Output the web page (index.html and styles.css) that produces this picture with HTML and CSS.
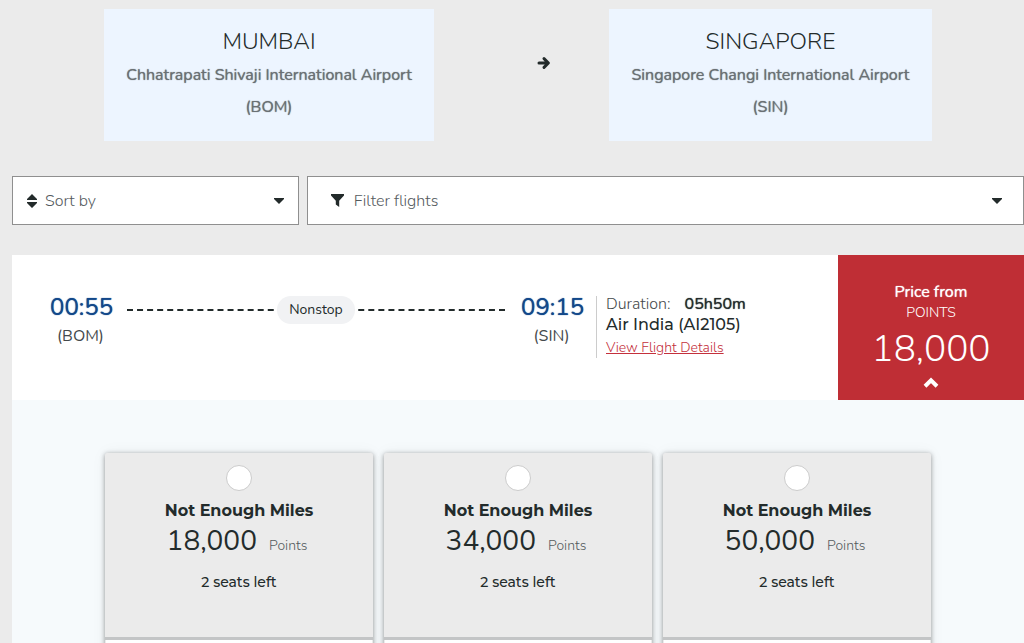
FILE: index.html
```html
<!DOCTYPE html>
<html lang="en">
<head>
<meta charset="utf-8">
<meta name="viewport" content="width=device-width, initial-scale=1">
<title>Mumbai to Singapore flights</title>
<link rel="stylesheet" href="styles.css">
</head>
<body>
<main class="page">
  <section class="route">
    <div class="airport">
      <h2 class="airport-city">MUMBAI</h2>
      <p class="airport-name">Chhatrapati Shivaji International Airport</p>
      <p class="airport-name">(BOM)</p>
    </div>
    <div class="route-arrow">
      <svg width="14" height="14" viewBox="0 0 14 14" aria-hidden="true"><path d="M2 7h9M7 2.6 11.4 7 7 11.4" fill="none" stroke="#232b2b" stroke-width="3" stroke-linecap="round" stroke-linejoin="round"/></svg>
    </div>
    <div class="airport">
      <h2 class="airport-city">SINGAPORE</h2>
      <p class="airport-name">Singapore Changi International Airport</p>
      <p class="airport-name">(SIN)</p>
    </div>
  </section>

  <section class="controls">
    <div class="control control-sort">
      <svg class="control-icon" width="10" height="14" viewBox="0 0 10 14" aria-hidden="true"><path d="M5 0 10 5v1H0V5zM0 8h10v1l-5 5-5-5z" fill="#232b2b"/></svg>
      <select class="control-select" aria-label="Sort by"><option>Sort by</option></select>
      <svg class="caret" width="10" height="6" viewBox="0 0 10 6" aria-hidden="true"><path d="M0 0h10v1L5 6 0 1z" fill="#232b2b"/></svg>
    </div>
    <button class="control control-filter" type="button">
      <svg class="control-icon" width="13" height="13" viewBox="0 0 13 13" aria-hidden="true"><path d="M0 0h13v1.6L8.2 6.8V13L4.8 10.4V6.8L0 1.6z" fill="#232b2b"/></svg>
      <span class="control-text">Filter flights</span>
      <svg class="caret" width="10" height="6" viewBox="0 0 10 6" aria-hidden="true"><path d="M0 0h10v1L5 6 0 1z" fill="#232b2b"/></svg>
    </button>
  </section>

  <section class="flight">
    <div class="flight-summary">
      <div class="flight-main">
        <div class="stop">
          <div class="stop-time">00:55</div>
          <div class="stop-code">(BOM)</div>
        </div>
        <div class="track">
          <div class="track-line"></div>
          <span class="track-label">Nonstop</span>
        </div>
        <div class="stop">
          <div class="stop-time">09:15</div>
          <div class="stop-code">(SIN)</div>
        </div>
        <div class="details">
          <div class="details-duration">Duration: <strong class="details-value">05h50m</strong></div>
          <div class="details-carrier">Air India (AI2105)</div>
          <a class="details-link" href="#details">View Flight Details</a>
        </div>
      </div>
      <button class="price" type="button">
        <span class="price-title">Price from</span>
        <span class="price-unit">POINTS</span>
        <span class="price-value">18,000</span>
        <svg class="price-toggle" width="16" height="12" viewBox="0 0 16 12" aria-hidden="true"><path d="M2 9.2 8 3.4 14 9.2" fill="none" stroke="#fff" stroke-width="4"/></svg>
      </button>
    </div>

    <div class="fares">
      <article class="fare">
        <label class="fare-choice">
          <input class="fare-radio" type="radio" name="fare">
          <span class="fare-title">Not Enough Miles</span>
          <span class="fare-price"><span class="fare-amount">18,000</span><span class="fare-unit">Points</span></span>
          <span class="fare-seats">2 seats left</span>
        </label>
        <div class="fare-body"></div>
      </article>
      <article class="fare">
        <label class="fare-choice">
          <input class="fare-radio" type="radio" name="fare">
          <span class="fare-title">Not Enough Miles</span>
          <span class="fare-price"><span class="fare-amount">34,000</span><span class="fare-unit">Points</span></span>
          <span class="fare-seats">2 seats left</span>
        </label>
        <div class="fare-body"></div>
      </article>
      <article class="fare">
        <label class="fare-choice">
          <input class="fare-radio" type="radio" name="fare">
          <span class="fare-title">Not Enough Miles</span>
          <span class="fare-price"><span class="fare-amount">50,000</span><span class="fare-unit">Points</span></span>
          <span class="fare-seats">2 seats left</span>
        </label>
        <div class="fare-body"></div>
      </article>
    </div>
  </section>
</main>
</body>
</html>
```
FILE: styles.css
```css
* { box-sizing: border-box; }

body {
  margin: 0;
  background: #ebebeb;
  color: #232b2b;
  font-family: Nunito, "Open Sans", "Noto Sans", sans-serif;
}

.page {
  height: 100vh;
  overflow: hidden;
  padding: 9px 0 0 12px;
}

.route {
  display: grid;
  grid-template-columns: 330fr 175fr 323fr;
  margin: 0 92px;
}

.airport {
  background: #edf5ff;
  padding: 16px 0 18px;
  text-align: center;
  white-space: nowrap;
}

.airport-city {
  margin: 0;
  font-size: 23px;
  font-weight: 300;
  line-height: 34px;
}

.airport-name {
  margin: 0;
  color: #6a7074;
  font-size: 16px;
  font-weight: 400;
  line-height: 32px;
  text-shadow: 0 0 1px #6a7074;
}

.route-arrow {
  display: flex;
  align-items: center;
  justify-content: center;
  padding: 0 0 24px 44px;
}

.controls {
  display: grid;
  grid-template-columns: 2fr 5fr;
  gap: 8px;
  margin-top: 35px;
}

.control {
  display: flex;
  align-items: center;
  gap: 8px;
  height: 49px;
  border: 1px solid #8f8f8f;
  background: #fff;
  color: #555b5e;
  font-family: inherit;
  font-size: 16px;
  font-weight: 300;
  text-align: left;
}

.control-sort { padding: 0 14px; }

.control-filter {
  gap: 10px;
  padding: 0 21px 0 23px;
}

.control-select {
  flex: 1;
  height: 100%;
  border: 0;
  padding: 0;
  appearance: none;
  background: transparent;
  color: inherit;
  font: inherit;
}

.control-text { flex: 1; }

.flight { margin-top: 30px; }

.flight-summary {
  display: flex;
  height: 145px;
  background: #fff;
}

.flight-main {
  display: flex;
  flex: 1;
  align-items: flex-start;
  padding: 36px 24px 0 38px;
}

.stop {
  width: 61px;
  text-align: center;
  white-space: nowrap;
}

.stop-time {
  color: #12488a;
  font-size: 24px;
  font-weight: 400;
  line-height: 32px;
  text-shadow: 0 0 1px #12488a;
}

.stop-code {
  color: #44494c;
  font-size: 16px;
  line-height: 26px;
}

.track {
  display: grid;
  flex: 1;
  align-items: center;
  margin: 5px 16px 0;
}

.track-line,
.track-label { grid-area: 1 / 1; }

.track-line { border-top: 2px dashed #232b2b; }

.track-label {
  justify-self: center;
  z-index: 1;
  border-radius: 14px;
  padding: 0 12px;
  background: #f1f2f4;
  font-size: 14px;
  line-height: 28px;
}

.details {
  width: 218px;
  margin: 5px 0 0 14px;
  border-left: 1px solid #ccc;
  padding-left: 9px;
  white-space: nowrap;
}

.details-duration {
  color: #44494c;
  font-size: 16px;
  font-weight: 300;
  line-height: 16px;
}

.details-value {
  margin-left: 10px;
  color: #232b2b;
  font-weight: 400;
  text-shadow: 0 0 1px #232b2b;
}

.details-carrier {
  font-family: Montserrat, Inter, sans-serif;
  font-size: 16px;
  font-weight: 500;
  line-height: 26px;
}

.details-link {
  display: block;
  color: #c4303c;
  font-size: 14px;
  font-weight: 300;
  line-height: 20px;
}

.price {
  display: flex;
  flex-direction: column;
  align-items: center;
  width: 186px;
  border: 0;
  padding: 26px 0 0;
  background: #bf2e35;
  color: #fff;
  font-family: inherit;
}

.price-title {
  font-size: 16px;
  font-weight: 400;
  line-height: 22px;
  text-shadow: 0 0 1px #fff;
}

.price-unit {
  font-size: 14px;
  font-weight: 300;
  line-height: 20px;
}

.price-value {
  font-size: 37px;
  font-weight: 300;
  line-height: 52px;
}

.price-toggle { margin-top: 2px; }

.fares {
  display: grid;
  grid-template-columns: repeat(3, 1fr);
  gap: 11px;
  min-height: 243px;
  padding: 53px 93px 24px;
  background: #f6fafc;
}

.fare {
  border-radius: 2px;
  background: #ebebeb;
  box-shadow: 0 1px 5px #0006, 0 0 16px #0000000d;
}

.fare-choice {
  display: flex;
  flex-direction: column;
  align-items: center;
  height: 187px;
  border-bottom: 3px solid #c3c5c6;
  padding-top: 12px;
}

.fare-radio {
  width: 26px;
  height: 26px;
  margin: 0;
  border: 1px solid #ccc;
  border-radius: 50%;
  appearance: none;
  background: #fff;
}

.fare-title {
  margin-top: 8px;
  font-family: Montserrat, Inter, sans-serif;
  font-size: 16px;
  font-weight: 700;
  line-height: 24px;
}

.fare-price {
  display: flex;
  align-items: baseline;
  gap: 12px;
  padding-right: 4px;
  line-height: 36px;
}

.fare-amount { font-size: 28px; }

.fare-unit {
  color: #555b5e;
  font-size: 14px;
  font-weight: 300;
}

.fare-seats {
  margin-top: 8px;
  font-family: Montserrat, Inter, sans-serif;
  font-size: 14px;
  font-weight: 500;
  line-height: 20px;
}

.fare-body {
  min-height: 40px;
  margin: 0 1px;
  background: #fff;
}
```
